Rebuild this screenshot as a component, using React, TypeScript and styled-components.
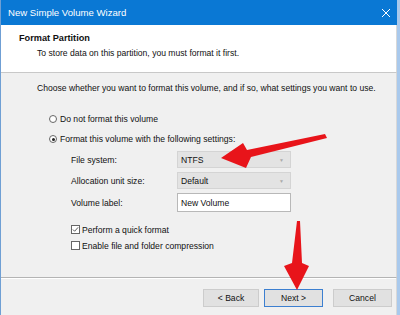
import React from "react";
import styled, { createGlobalStyle } from "styled-components";

const Global = createGlobalStyle`
  html, body { margin: 0; padding: 0; background: #ffffff; }
  body { font-family: "Liberation Sans", Arial, sans-serif; }
  * { box-sizing: border-box; }
`;

const Window = styled.div`
  position: relative;
  width: 400px;
  height: 315px;
  display: flex;
  flex-direction: column;
  border-left: 1px solid #6f9fd4;
  border-right: 3px solid #a9c9ec;
  background: #f0f0f0;
  overflow: hidden;
  font-size: 8.6px;
  color: #111;
`;

const TitleBar = styled.div`
  height: 25px;
  flex: none;
  background: #0a78d4;
  color: #ffffff;
  display: flex;
  align-items: center;
  justify-content: space-between;
  padding: 0 6px 0 7px;
  font-size: 9.6px;
`;

const CloseGlyph = styled.svg`
  width: 10px;
  height: 10px;
`;

const Header = styled.div`
  height: 48px;
  flex: none;
  background: #ffffff;
  border-bottom: 1px solid #c8c8c8;
  border-right: 1px solid #d8d8d8;
  padding: 8px 0 0 18px;
  display: flex;
  flex-direction: column;
  gap: 5px;
`;

const HeaderTitle = styled.div`
  font-weight: bold;
  font-size: 9.2px;
`;

const HeaderText = styled.div`
  padding-left: 18px;
`;

const Body = styled.div`
  flex: 1;
  display: flex;
  flex-direction: column;
  padding: 10px 0 0 36px;
  border-right: 1px solid #d8d8d8;
`;

const Intro = styled.div`
  margin-bottom: 20px;
`;

const Option = styled.label`
  display: flex;
  align-items: center;
  gap: 3px;
  height: 12px;
  margin-left: 12px;
  margin-bottom: 8px;
`;

const Radio = styled.span<{ $on?: boolean }>`
  width: 8px;
  height: 8px;
  border-radius: 50%;
  border: 1px solid #666;
  background: #fff;
  display: flex;
  align-items: center;
  justify-content: center;
  &::after {
    content: "";
    width: 3px;
    height: 3px;
    border-radius: 50%;
    background: ${(p) => (p.$on ? "#222" : "transparent")};
  }
`;

const Settings = styled.div`
  display: grid;
  grid-template-columns: 106px 114px;
  row-gap: 4px;
  margin-left: 34px;
  margin-top: -2px;
  align-items: center;
`;

const FieldLabel = styled.div`
  display: flex;
  align-items: center;
`;

const Select = styled.div`
  height: 17px;
  background: #e3e3e3;
  border: 1px solid #d4d4d4;
  display: flex;
  align-items: center;
  justify-content: space-between;
  padding: 0 6px 0 3px;
`;

const Caret = styled.span`
  font-size: 5px;
  color: #aaa;
`;

const TextBox = styled.div`
  height: 19px;
  background: #ffffff;
  border: 1px solid #b8b8b8;
  display: flex;
  align-items: center;
  padding: 0 3px;
`;

const Checks = styled.div`
  display: flex;
  flex-direction: column;
  gap: 5px;
  margin-left: 34px;
  margin-top: 12px;
`;

const CheckRow = styled.label`
  display: flex;
  align-items: center;
  gap: 2px;
  height: 11px;
`;

const Box = styled.span`
  width: 9px;
  height: 9px;
  border: 1px solid #666;
  background: #fff;
  display: flex;
  align-items: center;
  justify-content: center;
`;

const Footer = styled.div`
  height: 38px;
  flex: none;
  border-top: 1px solid #b4b4b4;
  box-shadow: inset 0 1px 0 #ffffff;
  border-right: 1px solid #d8d8d8;
  display: flex;
  justify-content: flex-end;
  align-items: center;
  padding: 2px 4px 0 0;
`;

const Button = styled.div<{ $primary?: boolean; $gap?: number; $w?: number }>`
  width: ${(p) => p.$w ?? 59}px;
  height: 18px;
  display: flex;
  align-items: center;
  justify-content: center;
  background: #e1e1e1;
  border: 1px solid ${(p) => (p.$primary ? "#3c7fd0" : "#cccccc")};
  margin-left: ${(p) => p.$gap ?? 0}px;
`;

const Overlay = styled.svg`
  position: absolute;
  left: 0;
  top: 0;
  pointer-events: none;
`;

export default function App() {
  return (
    <>
      <Global />
      <Window>
        <TitleBar>
          <span>New Simple Volume Wizard</span>
          <CloseGlyph viewBox="0 0 10 10">
            <path d="M1 1L9 9M9 1L1 9" stroke="#fff" strokeWidth="1" />
          </CloseGlyph>
        </TitleBar>
        <Header>
          <HeaderTitle>Format Partition</HeaderTitle>
          <HeaderText>To store data on this partition, you must format it first.</HeaderText>
        </Header>
        <Body>
          <Intro>Choose whether you want to format this volume, and if so, what settings you want to use.</Intro>
          <Option>
            <Radio />
            Do not format this volume
          </Option>
          <Option>
            <Radio $on />
            Format this volume with the following settings:
          </Option>
          <Settings>
            <FieldLabel>File system:</FieldLabel>
            <Select>
              NTFS<Caret>▼</Caret>
            </Select>
            <FieldLabel>Allocation unit size:</FieldLabel>
            <Select>
              Default<Caret>▼</Caret>
            </Select>
            <FieldLabel>Volume label:</FieldLabel>
            <TextBox>New Volume</TextBox>
          </Settings>
          <Checks>
            <CheckRow>
              <Box>
                <svg width="7" height="7" viewBox="0 0 8 8">
                  <path d="M1 4L3 6L7 1.5" stroke="#444" strokeWidth="1" fill="none" />
                </svg>
              </Box>
              Perform a quick format
            </CheckRow>
            <CheckRow>
              <Box />
              Enable file and folder compression
            </CheckRow>
          </Checks>
        </Body>
        <Footer>
          <Button $w={56}>&lt; Back</Button>
          <Button $primary $gap={5}>Next &gt;</Button>
          <Button $gap={10}>Cancel</Button>
        </Footer>
        <Overlay width="400" height="315" viewBox="0 0 400 315">
          <polygon points="220,158 242,143 246,150 324,134 326,138 250,157 245,168" fill="#e8141a" />
          <polygon points="296,221 299,221 301,263 308,266 296,290 283,266 291,263" fill="#e8141a" />
        </Overlay>
      </Window>
    </>
  );
}
